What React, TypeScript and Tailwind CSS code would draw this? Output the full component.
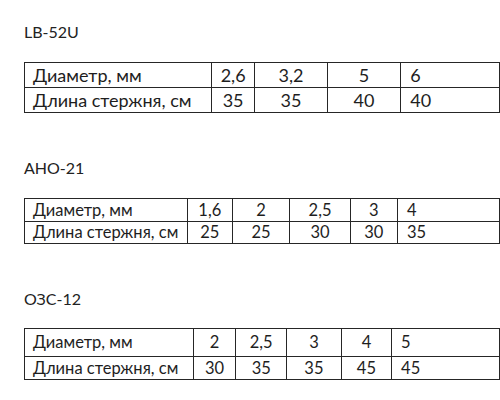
const tables = [
  {
    title: 'LB-52U',
    cols: ['w-[193px]', 'w-[49px]', 'w-[87px]', 'w-[90px]', 'w-[120px]'],
    rows: [
      ['Диаметр, мм', '2,6', '3,2', '5', '6'],
      ['Длина стержня, см', '35', '35', '40', '40'],
    ],
    heights: ['h-[25px]', 'h-[25px]'],
    titleGap: 'mt-[17px]',
    tableGap: 'mt-[20px] text-[18px]',
  },
  {
    title: 'АНО-21',
    cols: ['w-[165px]', 'w-[50px]', 'w-[67px]', 'w-[69px]', 'w-[54px]', 'w-[120px]'],
    rows: [
      ['Диаметр, мм', '1,6', '2', '2,5', '3', '4'],
      ['Длина стержня, см', '25', '25', '30', '30', '35'],
    ],
    heights: ['h-[23px]', 'h-[22px]'],
    titleGap: 'mt-[45px]',
    tableGap: 'mt-[20px] text-[16.5px]',
  },
  {
    title: 'ОЗС-12',
    cols: ['w-[171px]', 'w-[46px]', 'w-[55px]', 'w-[60px]', 'w-[55px]', 'w-[120px]'],
    rows: [
      ['Диаметр, мм', '2', '2,5', '3', '4', '5'],
      ['Длина стержня, см', '30', '35', '35', '45', '45'],
    ],
    heights: ['h-[28px]', 'h-[23px]'],
    titleGap: 'mt-[45px]',
    tableGap: 'mt-[19px] text-[16.5px]',
  },
];

function SizeTable({ t }: { t: (typeof tables)[number] }) {
  const last = t.cols.length - 1;
  return (
    <>
      <div className={`${t.titleGap} text-[16px] leading-[20px] text-[#222]`}>{t.title}</div>
      <table className={`${t.tableGap} table-fixed border-collapse text-[#1e1e1e]`}>
        <colgroup>
          {t.cols.map((w, i) => (
            <col key={i} className={w} />
          ))}
        </colgroup>
        <tbody>
          {t.rows.map((row, r) => (
            <tr key={r} className={t.heights[r]}>
              {row.map((cell, c) => (
                <td
                  key={c}
                  className={`border border-[#262626] p-0 leading-none align-middle whitespace-nowrap ${
                    c === 0 ? 'pl-[8px] text-left' : c === last ? 'pl-[9px] text-left' : 'text-center'
                  }`}
                >
                  {cell}
                </td>
              ))}
            </tr>
          ))}
        </tbody>
      </table>
    </>
  );
}

export default function App() {
  return (
    <div className="w-[500px] h-[400px] overflow-hidden bg-white pl-[24px] pt-[5px] font-['Lato','Open_Sans',sans-serif]">
      {tables.map((t) => (
        <SizeTable key={t.title} t={t} />
      ))}
    </div>
  );
}
